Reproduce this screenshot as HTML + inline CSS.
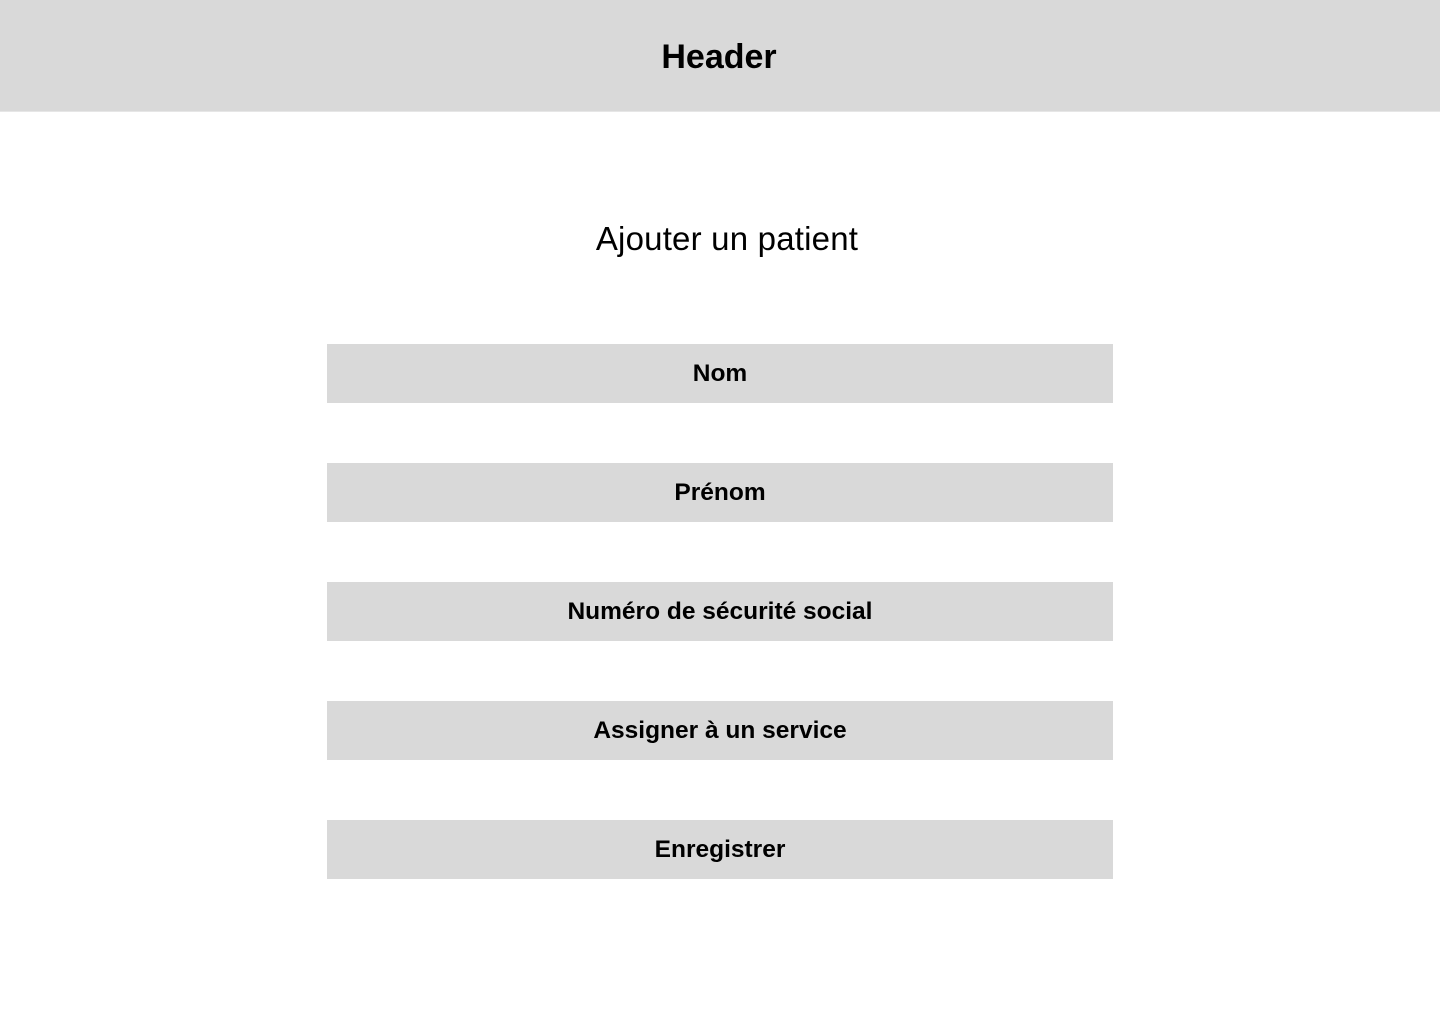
<!DOCTYPE html>
<html><head><meta charset="utf-8"><style>
html,body{margin:0;padding:0;background:#fff;width:1440px;height:1024px;overflow:hidden;font-family:"Liberation Sans",sans-serif;color:#000}
.hdr{position:absolute;left:0;top:0;width:1440px;height:112px;background:#d9d9d9;border-bottom:1px solid #e6e6e6;box-sizing:border-box}
.hdr span{position:absolute;left:0;right:0;top:37px;text-align:center;font-weight:bold;font-size:34px;line-height:40px;margin-left:-2px}
.title{position:absolute;left:14px;right:0;top:219px;text-align:center;font-size:33px;font-weight:300;line-height:40px;letter-spacing:0.2px}
.box{position:absolute;left:327px;width:786px;height:59px;background:#d9d9d9;text-align:center;font-weight:bold;font-size:24.5px;line-height:59px}
</style></head><body>
<div class="hdr"><span>Header</span></div>
<div class="title">Ajouter un patient</div>
<div class="box" style="top:344px">Nom</div>
<div class="box" style="top:463px">Prénom</div>
<div class="box" style="top:582px">Numéro de sécurité social</div>
<div class="box" style="top:701px">Assigner à un service</div>
<div class="box" style="top:820px">Enregistrer</div>
</body></html>
